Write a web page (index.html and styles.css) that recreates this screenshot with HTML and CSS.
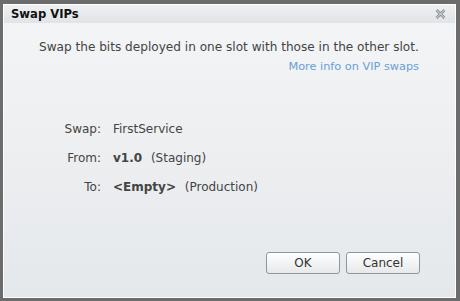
FILE: index.html
```html
<!DOCTYPE html>
<html lang="en">
<head>
    <meta charset="UTF-8">
    <title>Swap VIPs</title>
    <link rel="stylesheet" href="styles.css">
</head>
<body>
    <div class="dialog">
        <div class="title-bar">
            <span class="title">Swap VIPs</span>
            <span class="close-btn">
                <svg width="11" height="10" viewBox="0 0 11 10">
                    <path d="M1.5 1 L9.5 9 M9.5 1 L1.5 9" stroke="#80868c" stroke-width="2.6" fill="none"/>
                    <path d="M1.5 1 L9.5 9 M9.5 1 L1.5 9" stroke="#eef0f2" stroke-width="1" fill="none"/>
                </svg>
            </span>
        </div>
        <div class="content">
            <div class="intro">
                <p>Swap the bits deployed in one slot with those in the other slot.</p>
                <a href="#" class="more-link">More info on VIP swaps</a>
            </div>

            <div class="details">
                <div class="row">
                    <span class="label">Swap:</span>
                    <span class="value">FirstService</span>
                </div>
                <div class="row">
                    <span class="label">From:</span>
                    <span class="value"><b>v1.0</b> (Staging)</span>
                </div>
                <div class="row">
                    <span class="label">To:</span>
                    <span class="value"><b>&lt;Empty&gt;</b> (Production)</span>
                </div>
            </div>

            <div class="actions">
                <button class="btn">OK</button>
                <button class="btn">Cancel</button>
            </div>
        </div>
    </div>
</body>
</html>
```

FILE: styles.css
```css
* { margin: 0; padding: 0; box-sizing: border-box; }
html, body { height: 100%; }
body {
    background: #6c6c6c;
    padding: 4px 4px 3px 3px;
    font-family: 'DejaVu Sans', Verdana, sans-serif;
    color: #444;
    font-size: 12px;
}
.dialog {
    height: 294px;
    width: 453px;
    border: 1px solid #fff;
    display: flex;
    flex-direction: column;
    background: linear-gradient(#f4f5f6, #e5e8eb);
}
.title-bar {
    height: 18px;
    display: flex;
    align-items: center;
    justify-content: space-between;
    padding: 0 9px 0 7px;
    background: linear-gradient(#eef0f2, #e1e4e7);
}
.title { font-weight: bold; font-size: 11.6px; color: #111; }
.close-btn { display: flex; }
.content {
    flex: 1;
    display: flex;
    flex-direction: column;
    padding: 17px 35px 0 35px;
}
.intro { text-align: right; margin-right: 1px; }
.intro p { text-align: left; font-size: 12.1px; }
.more-link {
    display: inline-block;
    margin-top: 6px;
    color: #6a9fd6;
    text-decoration: none;
    font-size: 11.3px;
}
.details { margin-top: 49px; }
.row { display: flex; height: 29px; align-items: flex-start; }
.label { width: 62px; text-align: right; margin-right: 12px; }
.value b { margin-right: 5px; }
.actions {
    margin-top: auto;
    margin-bottom: 23px;
    display: flex;
    justify-content: flex-end;
    gap: 6px;
}
.btn {
    width: 74px;
    height: 22px;
    border: 1px solid #8a98a6;
    border-radius: 3px;
    background: linear-gradient(#ffffff, #e6e8ea);
    font-family: inherit;
    font-size: 12px;
    color: #333;
}
```
